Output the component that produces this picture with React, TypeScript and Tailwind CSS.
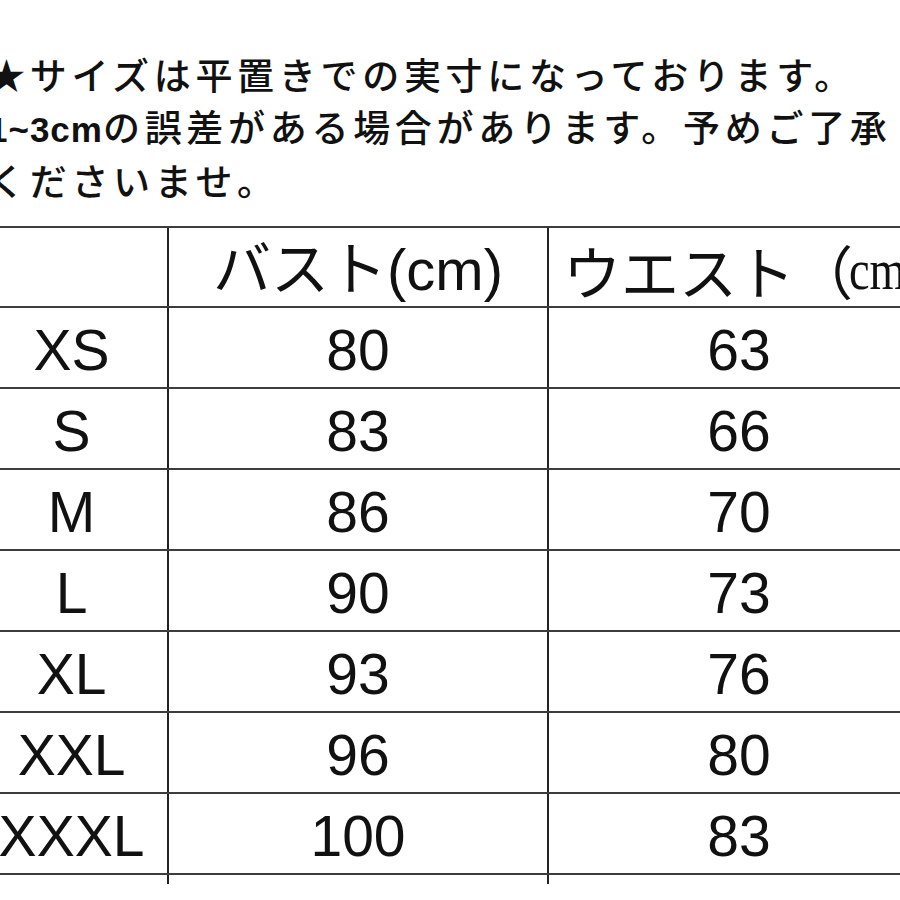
const rows = [
  { size: 'XS', bust: '80', waist: '63' },
  { size: 'S', bust: '83', waist: '66' },
  { size: 'M', bust: '86', waist: '70' },
  { size: 'L', bust: '90', waist: '73' },
  { size: 'XL', bust: '93', waist: '76' },
  { size: 'XXL', bust: '96', waist: '80' },
  { size: 'XXXL', bust: '100', waist: '83' },
];

export default function App() {
  return (
    <div className="w-[900px] h-[900px] overflow-hidden bg-white text-[#111]">
      {/* 注意書き */}
      <div className="pt-[49px] ml-[-12px] whitespace-nowrap text-[37px] leading-[51.5px] tracking-[4.7px] font-medium font-['Noto_Sans_CJK_JP',sans-serif]">
        <div>★サイズは平置きでの実寸になっております。</div>
        <div>
          <span className="font-bold tracking-[1px] text-[35px] font-['Liberation_Sans',sans-serif]">1~3cm</span>
          の誤差がある場合があります。予めご了承
        </div>
        <div>くださいませ。</div>
      </div>

      {/* サイズ表 */}
      <div className="mt-[19.5px] ml-[-24px] w-[953px] border-t-2 border-[#3c3c3c] font-['Liberation_Sans','Noto_Sans_CJK_JP',sans-serif]">
        <div className="flex h-[80px] border-b-2 border-[#3c3c3c] overflow-hidden">
          <div className="w-[193px] shrink-0 border-r-2 border-[#222]" />
          <div className="w-[380px] shrink-0 border-r-2 border-[#222] flex items-center justify-center pt-[6px] text-[58px] leading-none whitespace-nowrap">
            バスト(cm)
          </div>
          <div className="flex-1 min-w-0 flex items-center pl-[14px] pt-[6px] text-[58px] leading-none whitespace-nowrap font-['Noto_Sans_CJK_JP',sans-serif]">
            ウエスト（
            <span className="inline-block ml-[-4px] scale-x-80 origin-left font-['Liberation_Serif',serif]">cm)</span>
          </div>
        </div>

        {rows.map((r) => (
          <div key={r.size} className="flex h-[81px] border-b-2 border-[#3c3c3c] text-[57px] leading-none">
            <div className="w-[193px] shrink-0 border-r-2 border-[#222] flex items-center justify-center pt-[6px]">
              {r.size}
            </div>
            <div className="w-[380px] shrink-0 border-r-2 border-[#222] flex items-center justify-center pt-[6px]">
              {r.bust}
            </div>
            <div className="flex-1 flex items-center justify-center pt-[6px]">{r.waist}</div>
          </div>
        ))}

        <div className="flex h-[9px]">
          <div className="w-[193px] shrink-0 border-r-2 border-[#222]" />
          <div className="w-[380px] shrink-0 border-r-2 border-[#222]" />
        </div>
        <div className="mt-[16px] border-t border-[#d4d4d4]" />
      </div>
    </div>
  );
}
